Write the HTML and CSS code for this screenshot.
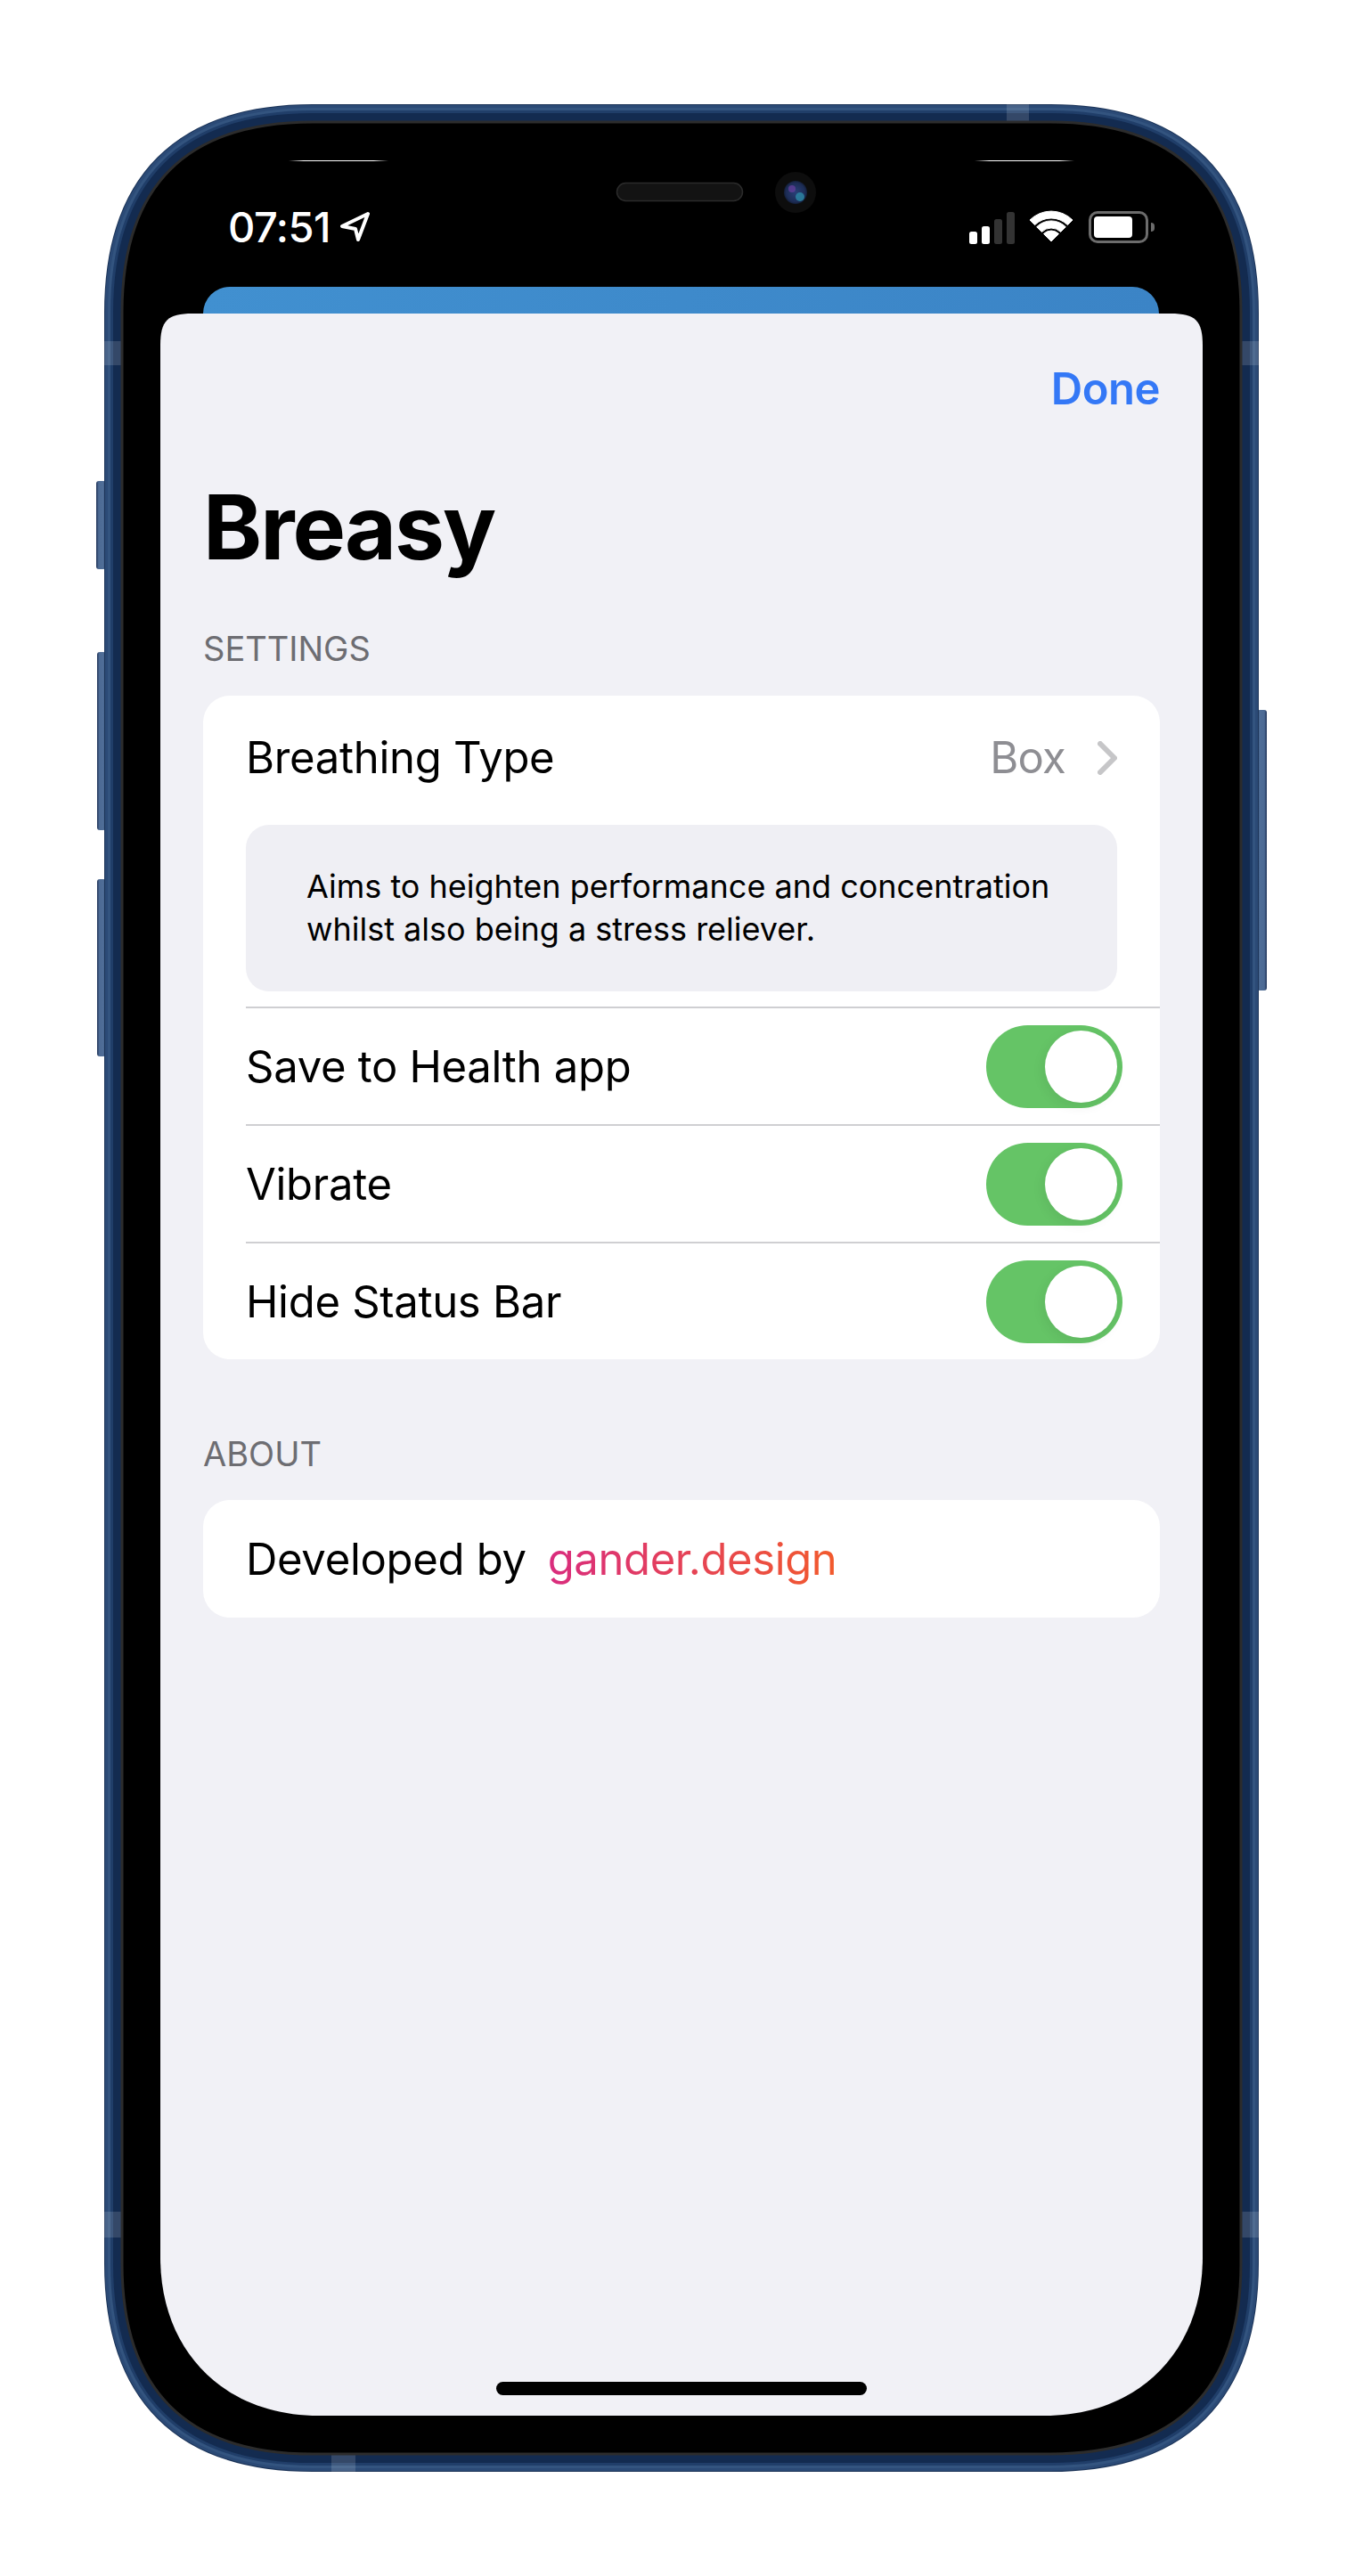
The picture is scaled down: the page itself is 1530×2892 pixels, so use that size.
FILE: index.html
```html
<!DOCTYPE html>
<html lang="en">
<head>
<meta charset="utf-8">
<title>Breasy</title>
<link rel="stylesheet" href="styles.css">
</head>
<body>
<main class="stage">
  <svg class="hardware" width="1530" height="2892" viewBox="0 0 1530 2892" aria-hidden="true">
    <defs>
      <path id="body" d="M351 137H1179C1321 137 1393 209 1393 351V2541C1393 2683 1321 2755 1179 2755H351C209 2755 137 2683 137 2541V351C137 209 209 137 351 137Z"/>
      <linearGradient id="btnL" x1="0" x2="1" y1="0" y2="0"><stop offset="0" stop-color="#1e3155"/><stop offset=".25" stop-color="#4c6a94"/><stop offset=".7" stop-color="#506e97"/><stop offset="1" stop-color="#33527c"/></linearGradient>
      <linearGradient id="btnR" x1="1" x2="0" y1="0" y2="0"><stop offset="0" stop-color="#1e3155"/><stop offset=".25" stop-color="#4c6a94"/><stop offset=".7" stop-color="#506e97"/><stop offset="1" stop-color="#33527c"/></linearGradient>
      <linearGradient id="rimLine" x1="0" x2="1" y1="0" y2="0"><stop offset="0" stop-color="#fff" stop-opacity="0"/><stop offset=".15" stop-color="#fff"/><stop offset=".85" stop-color="#fff"/><stop offset="1" stop-color="#fff" stop-opacity="0"/></linearGradient>
      <radialGradient id="lens" cx=".5" cy=".5" r=".55"><stop offset="0" stop-color="#2a3f78"/><stop offset=".75" stop-color="#1c2c55"/><stop offset="1" stop-color="#0e1525"/></radialGradient>
    </defs>
    <rect class="btn-l" x="108" y="540" width="11" height="99" rx="3"/>
    <rect class="btn-l" x="109" y="732" width="10" height="200" rx="3"/>
    <rect class="btn-l" x="109" y="987" width="10" height="199" rx="3"/>
    <rect class="btn-r" x="1411" y="797" width="11" height="315" rx="3"/>
    <use href="#body" class="rim rim-1"/>
    <use href="#body" class="rim rim-2"/>
    <use href="#body" class="rim rim-3"/>
    <use href="#body" class="rim rim-4"/>
    <use href="#body" class="rim rim-5"/>
    <rect class="band" x="1130" y="117" width="25" height="20"/>
    <rect class="band" x="117" y="383" width="20" height="27"/>
    <rect class="band" x="1393" y="383" width="20" height="27"/>
    <rect class="band" x="117" y="2483" width="20" height="29"/>
    <rect class="band" x="1393" y="2483" width="20" height="29"/>
    <rect class="band" x="372" y="2755" width="27" height="20"/>
    <use href="#body" class="glass"/>
    <use href="#body" class="rim-line"/>
    <rect class="sensor-line" x="324" y="180" width="112" height="1"/>
    <rect class="sensor-line" x="1094" y="180" width="112" height="1"/>
    <rect class="speaker" x="692.5" y="205.5" width="141" height="20" rx="10"/>
    <ellipse class="camera" cx="893" cy="216" rx="23" ry="23"/>
    <circle cx="893" cy="216" r="13" fill="url(#lens)"/>
    <circle class="lens-a" cx="889" cy="212" r="4"/>
    <circle class="lens-b" cx="898" cy="221" r="5"/>
  </svg>

  <div class="phone">
    <header class="status">
      <div class="status-left">
        <span class="time">07:51</span>
        <svg class="arrow" width="34" height="34" viewBox="0 0 34 34"><path d="M32 2 3 16l15 3 3 12Z"/></svg>
      </div>
      <div class="status-right">
        <svg class="signal" width="51" height="36" viewBox="0 0 51 36">
          <rect class="on" x="0" y="22" width="9" height="14" rx="2.5"/>
          <rect class="on" x="14" y="16" width="9" height="20" rx="2.5"/>
          <rect class="off" x="28" y="8" width="9" height="28" rx="2.5"/>
          <rect class="off" x="42" y="0" width="9" height="36" rx="2.5"/>
        </svg>
        <svg class="wifi" width="48" height="36" viewBox="0 0 48 36">
          <path d="M24 35 15.5 26.5A12 12 0 0 1 32.5 26.5Z"/>
          <path d="M7.7 18.7A23 23 0 0 1 40.3 18.7L34.6 24.4A15 15 0 0 0 13.4 24.4Z"/>
          <path d="M0 11A34 34 0 0 1 48 11L42.4 16.6A26 26 0 0 0 5.6 16.6Z"/>
        </svg>
        <div class="battery"><div class="battery-body"><div class="battery-fill"></div></div><div class="battery-cap"></div></div>
      </div>
    </header>
    <div class="peek"></div>
    <section class="sheet">
      <div class="sheet-top"><span class="done">Done</span></div>
      <h1 class="title">Breasy</h1>
      <h2 class="group-label">SETTINGS</h2>
      <div class="card">
        <div class="row row-first">
          <span>Breathing Type</span>
          <span class="value"><span class="value-text">Box</span>
            <svg class="chevron" width="22" height="38" viewBox="0 0 22 38"><path d="M3 3 19 19 3 35"/></svg>
          </span>
        </div>
        <p class="note">Aims to heighten performance and concentration whilst also being a stress reliever.</p>
        <div class="row row-line"><span>Save to Health app</span><span class="toggle"><span class="knob"></span></span></div>
        <div class="row row-line"><span>Vibrate</span><span class="toggle"><span class="knob"></span></span></div>
        <div class="row row-line"><span>Hide Status Bar</span><span class="toggle"><span class="knob"></span></span></div>
      </div>
      <h2 class="group-label group-about">ABOUT</h2>
      <div class="card">
        <div class="row row-about"><span>Developed by</span><span class="link">gander.design</span></div>
      </div>
      <div class="home-wrap"><div class="home"></div></div>
    </section>
  </div>
</main>
</body>
</html>
```

FILE: styles.css
```css
* { box-sizing: border-box; }
html, body { margin: 0; padding: 0; background: #fff; }
.stage { position: relative; width: 1530px; height: 2892px; overflow: hidden; font-family: Inter, "Liberation Sans", sans-serif; color: #000; }
.hardware { position: absolute; left: 0; top: 0; }
.btn-l { fill: url(#btnL); }
.btn-r { fill: url(#btnR); }
.rim, .glass, .rim-line { fill: none; }
.rim-1 { stroke: #1b3357; stroke-width: 40px; }
.rim-2 { stroke: #2b4a76; stroke-width: 38px; }
.rim-3 { stroke: #33547f; stroke-width: 32px; }
.rim-4 { stroke: #203e69; stroke-width: 26px; }
.rim-5 { stroke: #132b50; stroke-width: 20px; }
.band { fill: rgba(255, 255, 255, .14); }
.glass { fill: #000; }
.rim-line { stroke: #2c2c2c; stroke-width: 3px; }
.sensor-line { fill: url(#rimLine); }
.speaker { fill: #131313; stroke: #2b2b2b; stroke-width: 1.5px; }
.camera { fill: #0d0d0d; }
.lens-a { fill: #6a3fa0; opacity: .7; }
.lens-b { fill: #2d8aa8; opacity: .8; }

.phone { position: relative; margin-left: 180px; width: 1170px; padding-top: 322px; }
.status { position: absolute; left: 76px; top: 236px; width: 1040px; display: flex; justify-content: space-between; align-items: flex-start; color: #fff; }
.status-left { display: flex; align-items: center; gap: 10px; height: 38px; }
.time { font-size: 47px; font-weight: 500; line-height: 38px; letter-spacing: -.5px; }
.arrow { display: block; }
.arrow path { fill: none; stroke: #fff; stroke-width: 4px; stroke-linejoin: round; }
.status-right { display: flex; align-items: flex-start; }
.signal { margin-top: 2px; margin-right: 17px; }
.signal .on { fill: #fff; }
.signal .off { fill: #333; }
.wifi { margin-right: 18px; fill: #fff; stroke: #fff; stroke-width: 1px; stroke-linejoin: round; }
.battery { display: flex; align-items: center; margin-top: 1px; }
.battery-body { width: 67px; height: 36px; border: 3px solid #6c6c6c; border-radius: 10px; padding: 3px; }
.battery-fill { width: 43px; height: 24px; background: #fff; border-radius: 4px; }
.battery-cap { width: 4px; height: 10px; margin-left: 3px; background: #6c6c6c; border-radius: 0 4px 4px 0; }

.peek { height: 30px; margin: 0 49px 0 48px; background: linear-gradient(90deg, #4190d0, #3b84c6); border-radius: 30px 30px 0 0; }
.sheet { height: 2360px; padding: 0 48px; background: #f1f1f6; clip-path: path("M0 36C0 8 8 0 36 0H1134C1162 0 1170 8 1170 36V2182C1170 2288 1098 2360 992 2360H178C72 2360 0 2288 0 2182Z"); display: flex; flex-direction: column; }
.sheet-top { display: flex; justify-content: flex-end; height: 176px; padding-top: 55px; }
.done { color: #3478f6; font-size: 49px; font-weight: 600; line-height: 60px; letter-spacing: -.5px; }
.title { margin: 0; height: 128px; font-size: 100px; font-weight: 700; line-height: 128px; letter-spacing: -2px; }
.group-label { margin: 48px 0 0; height: 77px; font-size: 38px; font-weight: 400; line-height: 48px; color: #6d6d72; }
.card { background: #fff; border-radius: 30px; overflow: hidden; }
.row { display: flex; align-items: center; justify-content: space-between; height: 132px; margin-left: 48px; font-size: 49px; letter-spacing: -.3px; }
.row-first { height: 139px; padding-right: 48px; }
.row-line { border-top: 2px solid #cfcfd2; padding-right: 42px; }
.value { display: flex; align-items: center; gap: 36px; color: #8e8e93; }
.value-text { letter-spacing: -.8px; }
.chevron { fill: none; stroke: #c6c6c8; stroke-width: 6px; stroke-linecap: round; stroke-linejoin: round; }
.note { margin: 6px 48px 17px; height: 187px; padding: 45px 60px 0 68px; background: #efeff4; border-radius: 26px; font-size: 36px; line-height: 48px; }
.toggle { display: flex; justify-content: flex-end; align-items: center; width: 153px; height: 93px; padding: 6px; border-radius: 47px; background: #65c466; }
.knob { width: 81px; height: 81px; border-radius: 50%; background: #fff; box-shadow: -2px 4px 14px rgba(0, 0, 0, .07); }
.group-about { margin-top: 82px; height: 76px; }
.row-about { justify-content: flex-start; gap: 24px; }
.link { background: linear-gradient(90deg, #d92c7e, #f25a2c); -webkit-background-clip: text; background-clip: text; color: transparent; letter-spacing: -.4px; }
.home-wrap { margin-top: auto; padding-bottom: 23px; display: flex; justify-content: center; }
.home { width: 416px; height: 15px; border-radius: 8px; background: #000; }
```
